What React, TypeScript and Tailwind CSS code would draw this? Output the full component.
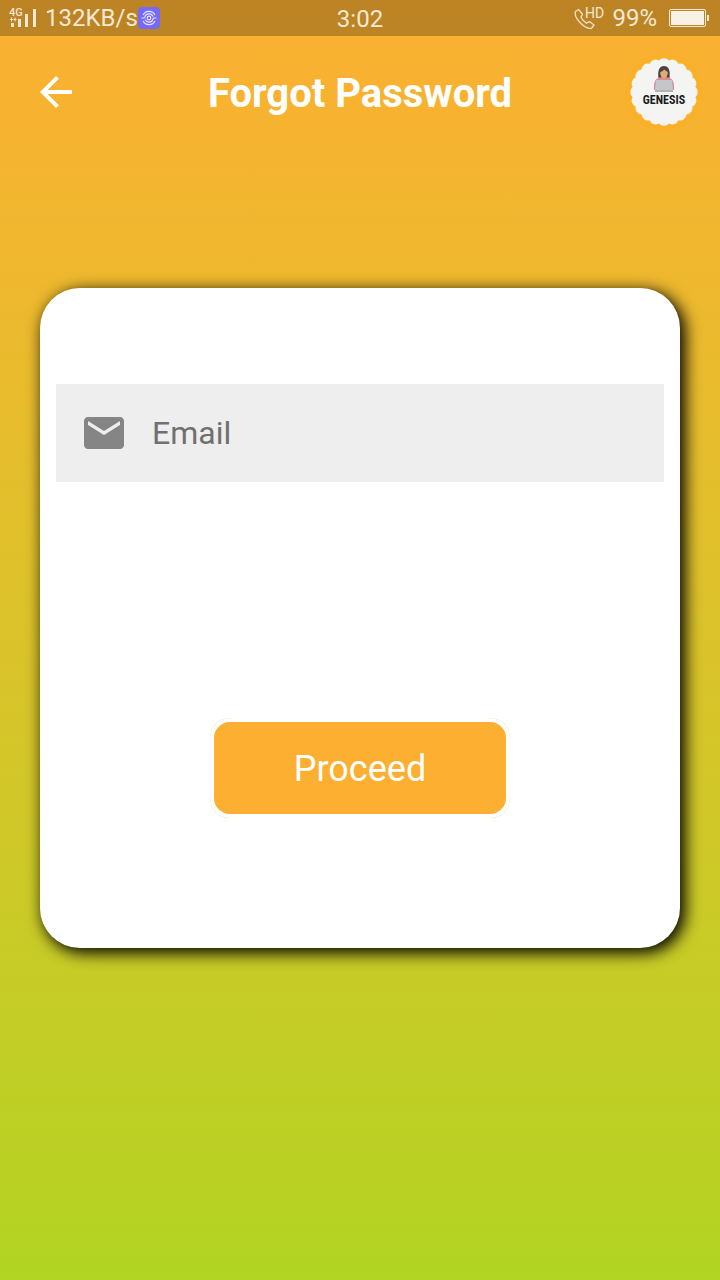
import React from "react";

function SignalIcon() {
  return (
    <svg width="30" height="22" viewBox="0 0 30 22" fill="#f5e9d5" aria-hidden="true">
      <text x="0" y="9" fontSize="11" fontWeight="500" fontFamily="Roboto, sans-serif">4G</text>
      <rect x="2" y="16" width="3" height="4" />
      <rect x="9" y="12" width="3" height="8" />
      <rect x="16" y="7" width="3" height="13" />
      <rect x="24" y="2" width="3" height="18" />
      <path d="M1 12.500h3M2.500 10.500v4M4.500 12.500h3M6 10.500v4" stroke="#f5e9d5" strokeWidth="1" />
    </svg>
  );
}

function SpiralIcon() {
  return (
    <svg width="22" height="22" viewBox="0 0 22 22" fill="none" stroke="#e9e4fa" strokeWidth="1.200" aria-hidden="true">
      <rect width="22" height="22" rx="4" fill="#766bf8" stroke="none" />
      <circle cx="11" cy="11" r="1.800" />
      <circle cx="11" cy="11" r="4.200" strokeDasharray="11 2.200" />
      <path d="M5.100 8a6.600 6.600 0 0 1 11.800 0M16.900 14a6.600 6.600 0 0 1-11.800 0M3.500 11h3.300M15.200 11h3.300" />
    </svg>
  );
}

function CallHdIcon() {
  return (
    <svg width="30" height="24" viewBox="0 0 30 24" fill="none" aria-hidden="true">
      <path
        d="M4.500 3.500L1.500 5.500C0.500 8.500 3 13.500 7 17.500C10.500 21 14 23 17.500 22.200L20 19L15.500 15.500L12.500 17.200C10.500 16 8 13.500 7 11.300L8.500 8.300Z"
        stroke="#f0dfc2"
        strokeWidth="1.400"
        strokeLinejoin="round"
      />
      <text x="11" y="12" fontSize="14" fontFamily="Roboto, sans-serif" fill="#f5e9d5">HD</text>
    </svg>
  );
}

function BatteryIcon() {
  return (
    <svg width="40" height="18" viewBox="0 0 40 18" fill="none" aria-hidden="true">
      <rect x="0.500" y="0.500" width="36" height="17" rx="1.500" stroke="#f5e9d5" />
      <rect x="2" y="2" width="33" height="14" fill="#f7f1e8" />
      <rect x="38" y="6" width="2" height="6" fill="#f5e9d5" />
    </svg>
  );
}

function scallop(cx: number, cy: number, inner: number, bumps: number) {
  const points = Array.from({ length: bumps }, (_, i) => {
    const a = ((i + 0.5) / bumps) * Math.PI * 2;
    return [cx + inner * Math.cos(a), cy + inner * Math.sin(a)];
  });
  const last = points[bumps - 1];
  return `M${last[0]} ${last[1]}` + points.map(([x, y]) => `A6.5 6.5 0 0 1 ${x} ${y}`).join("") + "Z";
}

function GenesisLogo() {
  return (
    <svg width="80" height="80" viewBox="0 0 80 80" role="img" aria-label="Genesis">
      <circle cx="40" cy="40" r="39" fill="#fbb02a" />
      <path d={scallop(40, 40, 31.8, 20)} fill="#f4f5f3" />
      <path d="M34.500 26C33.500 18 35.500 14 40 14S46.500 18 45.500 26L46 29H34Z" fill="#4c4142" />
      <path d="M30 38C29.500 30 31 26.500 36 25.500H44C49 26.500 50.500 30 50 38Z" fill="#dc8aa6" />
      <path d="M37.500 23H42.500V27L40 29L37.500 27Z" fill="#d69a68" />
      <ellipse cx="40" cy="21" rx="3.800" ry="4.800" fill="#e3ab76" />
      <path d="M36 20C36 16.500 38 15.500 40 15.500S44 16.500 44 20C42 19 41 18 40 17.500C39 19 38 19.500 36 20Z" fill="#4c4142" />
      <path d="M32 28H48L49 38H31Z" fill="#c5c6c8" />
      <path d="M31 38H49V40H31Z" fill="#b0b2b4" />
      <text
        x="40"
        y="52"
        textAnchor="middle"
        fontSize="12"
        fontWeight="700"
        fontFamily="'Liberation Sans Narrow', 'Roboto Condensed', Roboto, sans-serif"
        fill="#1b1b1b"
      >
        GENESIS
      </text>
    </svg>
  );
}

export default function App() {
  return (
    <div className="flex min-h-screen flex-col bg-linear-to-b from-[#fcaf31] to-[#b2d422] font-['Roboto',sans-serif]">
      <div className="grid h-9 grid-cols-3 items-center bg-black/25 pr-[11px] pl-[9px] text-2xl text-[#f5e9d5]">
        <div className="flex items-center">
          <SignalIcon />
          <span className="ml-1.5 whitespace-nowrap">132KB/s</span>
          <SpiralIcon />
        </div>
        <span className="pt-px pl-0.5 text-center">3:02</span>
        <div className="flex items-center justify-end">
          <CallHdIcon />
          <span className="mr-3 ml-2">99%</span>
          <BatteryIcon />
        </div>
      </div>

      <header className="flex h-28 items-center justify-between px-4">
        <button type="button" aria-label="Back" className="flex size-20 items-center justify-center">
          <svg width="48" height="48" viewBox="0 0 24 24" fill="#fff" aria-hidden="true">
            <path d="M20 11H7.830l5.590-5.590L12 4l-8 8 8 8 1.410-1.410L7.830 13H20v-2z" />
          </svg>
        </button>
        <h1 className="pt-1 text-[40px] font-bold text-white">Forgot Password</h1>
        <GenesisLogo />
      </header>

      <main className="px-10 pt-35 pb-10">
        <form
          className="flex flex-col rounded-[40px] bg-white px-4 pt-24 pb-[130px] shadow-[4px_4px_16px_1px_#000]"
          onSubmit={(event) => event.preventDefault()}
        >
          <div className="flex items-center bg-[#eeeeee] py-6 pl-6">
            <label htmlFor="email" aria-label="Email">
              <svg width="48" height="48" viewBox="0 0 24 24" fill="#858585" aria-hidden="true">
                <path d="M20 4H4c-1.100 0-1.990.9-1.990 2L2 18c0 1.100.9 2 2 2h16c1.100 0 2-.9 2-2V6c0-1.100-.9-2-2-2zm0 4l-8 5-8-5V6l8 5 8-5v2z" />
              </svg>
            </label>
            <input
              id="email"
              type="email"
              placeholder="Email"
              className="ml-6 h-[50px] min-w-0 flex-1 bg-transparent text-[32px] text-[#333] outline-none placeholder:text-[#707070]"
            />
          </div>
          <div className="mt-59 self-center rounded-[20px] bg-[#fcaf31]">
            <div className="rounded-[20px] bg-white p-1">
              <button type="submit" className="h-23 w-73 rounded-2xl bg-[#fcaf31] pt-0.5 text-4xl text-white">
                Proceed
              </button>
            </div>
          </div>
        </form>
      </main>
    </div>
  );
}
